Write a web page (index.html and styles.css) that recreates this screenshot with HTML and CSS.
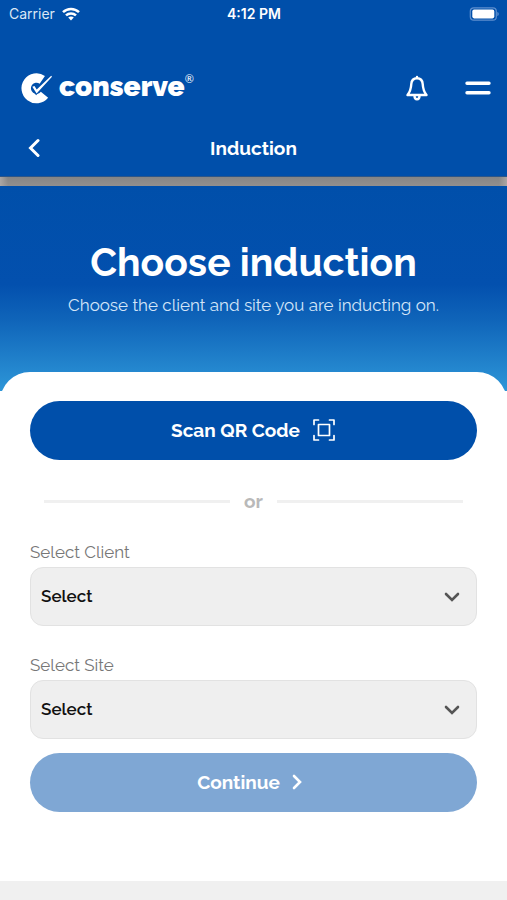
FILE: index.html
```html
<!DOCTYPE html>
<html lang="en">
<head>
<meta charset="utf-8">
<meta name="viewport" content="width=device-width, initial-scale=1">
<title>Induction</title>
<link rel="stylesheet" href="styles.css">
</head>
<body>
<header class="header">
  <div class="status">
    <div class="carrier">
      <span>Carrier</span>
      <svg width="18" height="14" viewBox="0 0 18 14" fill="none" stroke="#fff" stroke-width="2.5" aria-hidden="true">
        <path d="M1 5.200C5.500.8 12.500.8 17 5.200"/>
        <path d="M4 8.400c2.800-2.700 7.200-2.700 10 0"/>
        <path d="M9 13.500 6.200 10.600c1.600-1.500 4-1.500 5.600 0z" fill="#fff" stroke="none"/>
      </svg>
    </div>
    <span class="time">4:12 PM</span>
    <svg class="battery" width="30" height="14" viewBox="0 0 30 14" aria-hidden="true">
      <rect x="1.300" y=".8" width="26" height="12.400" rx="3.500" fill="none" stroke="#5d8fce" stroke-width="1.200"/>
      <rect x="3.300" y="2.600" width="22" height="8.800" rx="1.800" fill="#fff"/>
      <path d="M28.300 5c2 .8 2 3.200 0 4z" fill="#5d8fce"/>
    </svg>
  </div>
  <div class="brand-row">
    <a class="brand" href="#" aria-label="Conserve home">
      <svg width="32" height="32" viewBox="0 0 32 32" fill="none" aria-hidden="true">
        <path d="M22.300 7.800A10.300 10.300 0 1 0 24.500 22.800" stroke="#fff" stroke-width="9.400"/>
        <path d="m13 15.500 3.300 4.500L31 4.500" stroke="#004faa" stroke-width="4.200"/>
        <path d="m12.300 14.800 2.200-.8 2.200 3.600L31.200 3.800l.8 1L16.600 21.600z" fill="#fff"/>
      </svg>
      <span class="brand-name">conserve</span><span class="mark">®</span>
    </a>
    <div class="actions">
      <button class="icon-button" type="button" aria-label="Notifications">
        <svg width="24" height="26" viewBox="0 0 24 26" fill="none" stroke="#fff" stroke-width="2.400" stroke-linejoin="round" stroke-linecap="round" aria-hidden="true">
          <path d="M12 3.200C8.500 3.200 6.500 5.500 6.300 9c-.3 5-1.300 8-3.800 11h19c-2.500-3-3.500-6-3.800-11C17.500 5.500 15.500 3.200 12 3.200zM12 2v1"/>
          <path d="M9.500 20.500c0 5 5 5 5 0"/>
        </svg>
      </button>
      <button class="icon-button" type="button" aria-label="Menu">
        <svg width="26" height="26" viewBox="0 0 26 26" stroke="#fff" stroke-width="3.400" stroke-linecap="round" aria-hidden="true">
          <path d="M2 8.200h22M2 17.800h22"/>
        </svg>
      </button>
    </div>
  </div>
  <nav class="nav">
    <button class="icon-button" type="button" aria-label="Back">
      <svg width="12" height="20" viewBox="0 0 12 20" fill="none" stroke="#fff" stroke-width="3" stroke-linecap="round" aria-hidden="true"><path d="M10 2.500 2.500 10l7.500 7.500"/></svg>
    </button>
    <span class="nav-title">Induction</span>
  </nav>
</header>
<main>
  <div class="band"></div>
  <section class="hero">
    <h1>Choose induction</h1>
    <p>Choose the client and site you are inducting on.</p>
  </section>
  <form class="card">
    <button class="pill" type="button">
      <span>Scan QR Code</span>
      <svg width="24" height="24" viewBox="0 0 24 24" fill="none" stroke="#fff" stroke-width="1.700" stroke-linejoin="round" stroke-linecap="round" aria-hidden="true">
        <path d="M2 6.500V2h4.500M17.500 2H22v4.500M22 17.500V22h-4.500M6.500 22H2v-4.500"/>
        <rect x="6.500" y="6.500" width="11" height="11"/>
      </svg>
    </button>
    <div class="divider"><span>or</span></div>
    <div class="field">
      <label for="client">Select Client</label>
      <div class="select">
        <select id="client"><option>Select</option></select>
        <svg width="16" height="12" viewBox="0 0 16 12" fill="none" stroke="#555" stroke-width="2.600" stroke-linecap="round" aria-hidden="true"><path d="m2 3 6 6 6-6"/></svg>
      </div>
    </div>
    <div class="field">
      <label for="site">Select Site</label>
      <div class="select">
        <select id="site"><option>Select</option></select>
        <svg width="16" height="12" viewBox="0 0 16 12" fill="none" stroke="#555" stroke-width="2.600" stroke-linecap="round" aria-hidden="true"><path d="m2 3 6 6 6-6"/></svg>
      </div>
    </div>
    <button class="pill pill-muted" type="submit" disabled>
      <span>Continue</span>
      <svg width="18" height="16" viewBox="0 0 18 16" fill="none" stroke="#fff" stroke-width="2.600" stroke-linecap="round" aria-hidden="true"><path d="m2 2 6 6-6 6"/></svg>
    </button>
  </form>
</main>
<footer class="footer"></footer>
</body>
</html>
```
FILE: styles.css
```css
* {
  box-sizing: border-box;
}

body {
  display: flex;
  flex-direction: column;
  min-height: 100vh;
  margin: 0;
  background: #fff;
  font-family: Raleway, Lato, sans-serif;
}

button,
select {
  font: inherit;
}

.header {
  background: #004faa;
  color: #fff;
  border-bottom: 1px solid #2d5688;
}

.status {
  display: grid;
  grid-template-columns: 1fr auto 1fr;
  align-items: center;
  height: 28px;
  padding: 0 8px 1px 9px;
  font-family: Inter, sans-serif;
  font-size: 14px;
}

.carrier {
  display: flex;
  align-items: center;
  gap: 7px;
  color: #dbe7f5;
}

.time {
  font-weight: 600;
}

.battery {
  justify-self: end;
}

.brand-row {
  display: flex;
  align-items: center;
  justify-content: space-between;
  height: 90px;
  padding: 30px 16px 0 20px;
}

.brand {
  display: flex;
  align-items: center;
  color: inherit;
  text-decoration: none;
}

.brand-name {
  margin-left: 7px;
  padding-bottom: 2px;
  font-size: 28px;
  font-weight: 900;
  line-height: 32px;
}

.mark {
  align-self: flex-start;
  font-family: Lato, sans-serif;
  font-size: 11px;
  line-height: 16px;
}

.actions {
  display: flex;
  align-items: center;
  gap: 36px;
}

.icon-button {
  display: flex;
  padding: 0;
  border: 0;
  background: none;
}

.nav {
  display: grid;
  grid-template-columns: 1fr auto 1fr;
  align-items: center;
  height: 58px;
  padding: 2px 28px 0;
}

.nav-title {
  font-size: 19px;
  font-weight: 700;
}

.band {
  height: 9px;
  background:
    linear-gradient(90deg, #aaa6a4, transparent 8px calc(100% - 8px), #aaa6a4),
    linear-gradient(#858585, #928f8d);
}

.hero {
  padding: 52px 16px 73px;
  background: linear-gradient(#004faa 0%, #0350ae 48%, #0f64b9 65%, #2d96d8 100%);
  color: #fff;
  text-align: center;
}

h1 {
  margin: 0;
  font-size: 39px;
  font-weight: 700;
  line-height: 48px;
}

.hero p {
  margin: 6px 0 0;
  color: #d3e5f8;
  font-size: 17px;
  line-height: 26px;
}

.card {
  position: relative;
  margin-top: -19px;
  padding: 29px 30px 69px;
  border-radius: 30px 30px 0 0;
  background: #fff;
}

.pill {
  display: flex;
  align-items: center;
  justify-content: center;
  gap: 12px;
  width: 100%;
  height: 59px;
  padding: 0 0 2px;
  border: 0;
  border-radius: 30px;
  background: #004faa;
  color: #fff;
  font-size: 19px;
  font-weight: 700;
}

.pill-muted {
  margin-top: 14px;
  background: #7fa7d4;
}

.divider {
  display: flex;
  align-items: center;
  gap: 14px;
  margin: 28px 14px 27px;
  color: #b9b9b9;
  font-size: 19px;
  font-weight: 700;
  line-height: 26px;
}

.divider::before,
.divider::after {
  content: "";
  flex: 1;
  height: 3px;
  background: #f0f0f0;
}

.field + .field {
  margin-top: 28px;
}

.field label {
  display: block;
  height: 26px;
  color: #777;
  font-size: 17px;
  line-height: 22px;
}

.select {
  display: grid;
  align-items: center;
}

.select > * {
  grid-area: 1 / 1;
}

.select select {
  width: 100%;
  height: 59px;
  padding: 0 40px 2px 10px;
  border: 1px solid #e2e2e2;
  border-radius: 13px;
  appearance: none;
  background: #efefef;
  color: #111;
  font-size: 17px;
  font-weight: 600;
}

.select svg {
  justify-self: end;
  margin-right: 17px;
  pointer-events: none;
}

.footer {
  flex: 1;
  min-height: 19px;
  background: #f0f0f0;
}
```
